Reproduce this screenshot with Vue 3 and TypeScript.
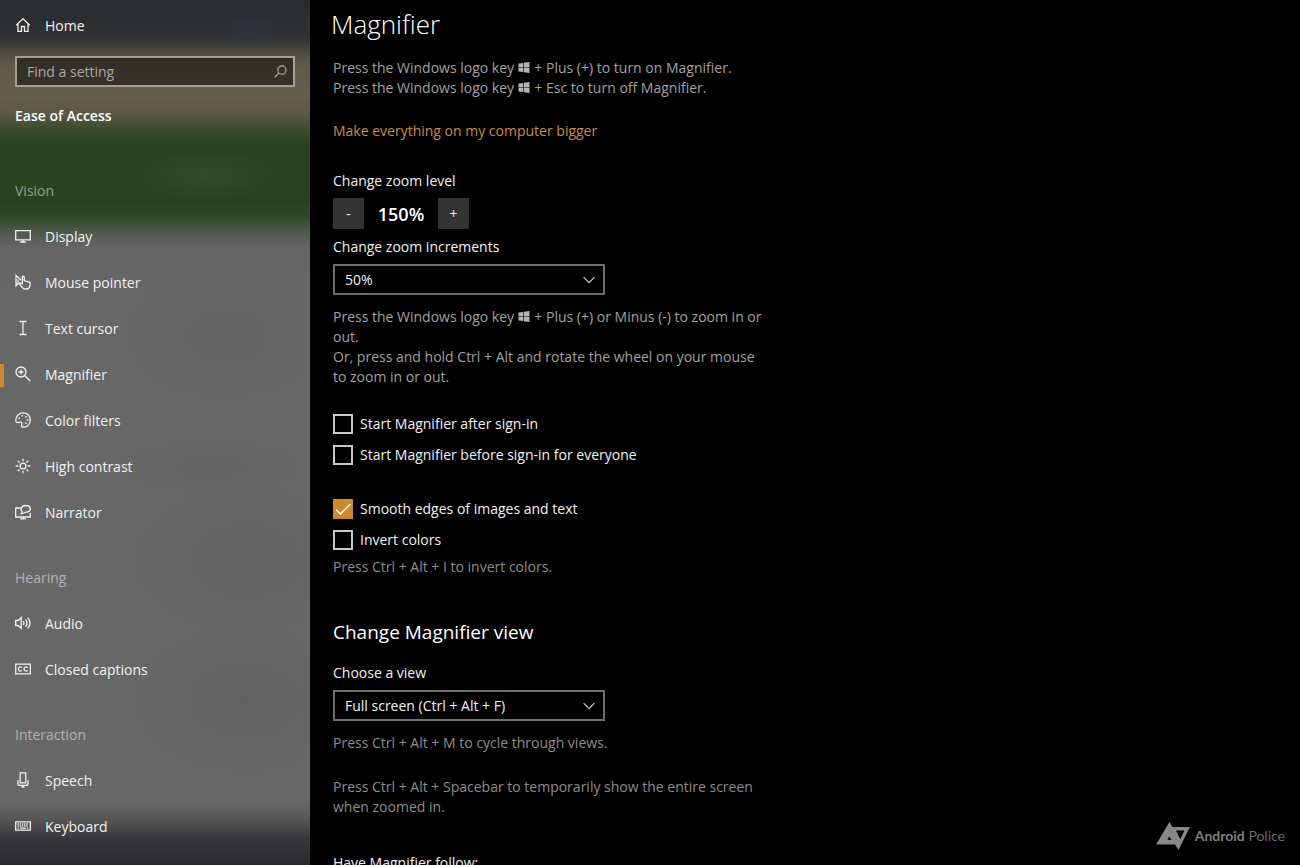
<script setup lang="ts">
import { ref } from 'vue'

interface NavItem {
  id: string
  label: string
}
interface NavGroup {
  title: string
  items: NavItem[]
}

const groups: NavGroup[] = [
  {
    title: 'Vision',
    items: [
      { id: 'display', label: 'Display' },
      { id: 'pointer', label: 'Mouse pointer' },
      { id: 'cursor', label: 'Text cursor' },
      { id: 'magnifier', label: 'Magnifier' },
      { id: 'filters', label: 'Color filters' },
      { id: 'contrast', label: 'High contrast' },
      { id: 'narrator', label: 'Narrator' },
    ],
  },
  {
    title: 'Hearing',
    items: [
      { id: 'audio', label: 'Audio' },
      { id: 'captions', label: 'Closed captions' },
    ],
  },
  {
    title: 'Interaction',
    items: [
      { id: 'speech', label: 'Speech' },
      { id: 'keyboard', label: 'Keyboard' },
    ],
  },
]

// Line drawings on a 16 x 16 grid
const icons: Record<string, string> = {
  home: '<path d="M1.200 8.200 8 1.800l6.800 6.400M3 7v7.300h3.500V9.500h3v4.800H13V7"/>',
  display: '<path d="M.7 2.600h14.600v9.200H.7zM8 11.800v2M5.200 14h5.600"/>',
  pointer:
    '<path d="M5 9.700 3.200 9.400 1 11.800V1.500l5 4.600M3 5.500v3.500"/><path d="M7.300 9.800V3.200c0-1.400 1.900-1.400 1.900 0v3.600l4.700 1.100c1 .3 1.400.9 1.300 1.900l-.5 2.700c-.5 1.700-1.600 2.500-3.200 2.500h-1.300c-1.200 0-2-.4-2.700-1.300L4.400 10.200c-.6-1.100.6-1.800 1.400-1.100z"/>',
  cursor: '<path d="M4.500 1.500h2.700L8 2l.8-.5h2.700M8 2v12M4.500 14.500h2.700L8 14l.8.5h2.700"/>',
  magnifier: '<circle cx="6" cy="6" r="5"/><path d="m9.700 9.700 5.600 5.300M3.600 6h4.800M6 3.600v4.800"/>',
  filters:
    '<path d="M.8 8.400C.9 4 4 .8 8 .8c4.200 0 7.200 3 7.200 7.100 0 4.300-2.700 7.300-6.500 7.300-1.700 0-2.400-1-2-2.400.4-1.500.3-2.700-1.100-2.900-1.600-.2-2.200 1.200-3.600.6-.8-.3-1.200-1-1.200-2.100z"/><path class="dots" d="M3.600 5.500h1.500v1.500H3.600zM6.600 3h1.500v1.500H6.600zM10.200 4h1.500v1.500h-1.500zM11.800 7.200h1.500v1.500h-1.500zM10 10.500h1.500V12H10z"/>',
  contrast:
    '<circle cx="8" cy="8" r="2.900"/><path d="M8 .7v2.500M8 12.800v2.500M.7 8h2.500M12.800 8h2.500M2.800 2.800l1.800 1.800M11.400 11.400l1.800 1.800M13.200 2.800l-1.800 1.800M4.600 11.400l-1.800 1.800"/>',
  narrator:
    '<path d="M5.500 4H.7v9h14.600V9M8 13v1.800M5.200 14.800h5.600"/><path d="M5.600 9.800c1.300-.6 1.700-1.300 1.500-2.200C4.800 5.200 6.500 1.500 10.600 1.500c5.900 0 6.200 6.300.5 6.700-1.500.1-2.300 1.400-5.500 1.600z"/>',
  audio:
    '<path d="M.7 5.500h2.500L6.200 2.600v10.800l-3-2.900H.7zM8.300 6.200c.8 1.100.8 2.500 0 3.600M10.500 4.400c1.800 2.200 1.800 5 0 7.200M12.700 2.600c2.900 3.300 2.900 7.500 0 10.800"/>',
  captions:
    '<path d="M.7 3.200h14.600v9.600H.7zM7 6.600C5.500 5.400 3.300 6 3.300 8s2.200 2.600 3.700 1.400M12.700 6.600C11.200 5.400 9 6 9 8s2.200 2.600 3.700 1.400"/>',
  speech: '<path d="M5.200.8h5.600v10H5.200zM3 8v3.400c0 1 .8 1.900 1.900 1.900h6.200c1.100 0 1.900-.9 1.900-1.900V8M8 13.300v2M6.500 15h3"/>',
  keyboard:
    '<path d="M.7 3.800h14.600v8.400H.7z"/><path stroke-dasharray="1.400 .8" d="M2.500 6h11M2.500 8h11"/><path d="M2.500 10.200h1.400M5 10.200h6M12 10.200h1.400"/>',
}

const active = ref('magnifier')
const query = ref('')
const zoom = ref(150)
const increment = ref('50')
const view = ref('full')
const afterSignIn = ref(false)
const beforeSignIn = ref(false)
const smooth = ref(true)
const invert = ref(false)

function step(direction: number): void {
  zoom.value = Math.min(1600, Math.max(100, zoom.value + direction * Number(increment.value)))
}
</script>

<template>
  <div class="app">
    <aside class="side">
      <a class="row home" href="#home">
        <svg class="icon" viewBox="0 0 16 16" aria-hidden="true" v-html="icons.home"></svg>
        <span>Home</span>
      </a>
      <div class="search">
        <input v-model="query" type="text" placeholder="Find a setting" aria-label="Find a setting" />
        <svg viewBox="0 0 14 14" aria-hidden="true">
          <circle cx="8.500" cy="5.500" r="4.500" />
          <path d="M5.200 8.800.8 13.200" />
        </svg>
      </div>
      <h2 class="area">Ease of Access</h2>
      <nav aria-label="Ease of Access">
        <section v-for="g in groups" :key="g.title" class="group">
          <h3>{{ g.title }}</h3>
          <a
            v-for="item in g.items"
            :key="item.id"
            class="row"
            :class="{ active: active === item.id }"
            :href="'#' + item.id"
            @click="active = item.id"
          >
            <svg class="icon" viewBox="0 0 16 16" aria-hidden="true" v-html="icons[item.id]"></svg>
            <span>{{ item.label }}</span>
          </a>
        </section>
      </nav>
    </aside>

    <main class="main">
      <h1>Magnifier</h1>
      <div class="hint">
        <p>
          Press the Windows logo key
          <svg class="win" viewBox="0 0 12 12" role="img" aria-label="Windows"><path d="M0 1.700 5 1v4.600H0zM5.700.9 12 0v5.600H5.700zM0 6.300h5V11l-5-.7zM5.700 6.300H12V12l-6.300-.9z" /></svg>
          + Plus (+) to turn on Magnifier.
        </p>
        <p>
          Press the Windows logo key
          <svg class="win" viewBox="0 0 12 12" role="img" aria-label="Windows"><path d="M0 1.700 5 1v4.600H0zM5.700.9 12 0v5.600H5.700zM0 6.300h5V11l-5-.7zM5.700 6.300H12V12l-6.300-.9z" /></svg>
          + Esc to turn off Magnifier.
        </p>
      </div>
      <a class="link" href="#display">Make everything on my computer bigger</a>

      <div class="label" id="zoom-label">Change zoom level</div>
      <div class="stepper" role="group" aria-labelledby="zoom-label">
        <button type="button" aria-label="Zoom out" @click="step(-1)">-</button>
        <output>{{ zoom }}%</output>
        <button type="button" aria-label="Zoom in" @click="step(1)">+</button>
      </div>

      <label class="label" for="increment">Change zoom increments</label>
      <div class="select">
        <select id="increment" v-model="increment">
          <option value="25">25%</option>
          <option value="50">50%</option>
          <option value="100">100%</option>
        </select>
        <svg viewBox="0 0 12 8" aria-hidden="true"><path d="m.6 1.200 5.400 5.400 5.400-5.400" /></svg>
      </div>
      <div class="hint after-select">
        <p>
          Press the Windows logo key
          <svg class="win" viewBox="0 0 12 12" role="img" aria-label="Windows"><path d="M0 1.700 5 1v4.600H0zM5.700.9 12 0v5.600H5.700zM0 6.300h5V11l-5-.7zM5.700 6.300H12V12l-6.300-.9z" /></svg>
          + Plus (+) or Minus (-) to zoom in or out.
        </p>
        <p>Or, press and hold Ctrl + Alt and rotate the wheel on your mouse to zoom in or out.</p>
      </div>

      <div class="checks">
        <label class="check"><input v-model="afterSignIn" type="checkbox" /><svg viewBox="0 0 20 20" aria-hidden="true"><path d="m3 10.500 4.500 4.500L17.500 5" /></svg>Start Magnifier after sign-in</label>
        <label class="check"><input v-model="beforeSignIn" type="checkbox" /><svg viewBox="0 0 20 20" aria-hidden="true"><path d="m3 10.500 4.500 4.500L17.500 5" /></svg>Start Magnifier before sign-in for everyone</label>
      </div>
      <div class="checks second">
        <label class="check"><input v-model="smooth" type="checkbox" /><svg viewBox="0 0 20 20" aria-hidden="true"><path d="m3 10.500 4.500 4.500L17.500 5" /></svg>Smooth edges of images and text</label>
        <label class="check"><input v-model="invert" type="checkbox" /><svg viewBox="0 0 20 20" aria-hidden="true"><path d="m3 10.500 4.500 4.500L17.500 5" /></svg>Invert colors</label>
      </div>
      <p class="hint dim after-check">Press Ctrl + Alt + I to invert colors.</p>

      <h2 class="title">Change Magnifier view</h2>
      <label class="label view-label" for="view">Choose a view</label>
      <div class="select">
        <select id="view" v-model="view">
          <option value="full">Full screen (Ctrl + Alt + F)</option>
          <option value="lens">Lens (Ctrl + Alt + L)</option>
          <option value="docked">Docked (Ctrl + Alt + D)</option>
        </select>
        <svg viewBox="0 0 12 8" aria-hidden="true"><path d="m.6 1.200 5.400 5.400 5.400-5.400" /></svg>
      </div>
      <p class="hint dim after-select">Press Ctrl + Alt + M to cycle through views.</p>
      <p class="hint dim spaced">
        Press Ctrl + Alt + Spacebar to temporarily show the entire screen when zoomed in.
      </p>
      <div class="label follow">Have Magnifier follow:</div>
    </main>

    <div class="brand">
      <svg viewBox="0 0 34 28" aria-hidden="true">
        <path fill-rule="evenodd" d="M13.500 0 16.500 5H34L22.500 28 19 22.500H0zM13.200 14.500 11.400 18h4.200zM20 8.500l4.200 8.500 4.300-8.500z" />
      </svg>
      <span><b>Android</b> Police</span>
    </div>
  </div>
</template>

<style>
body {
  margin: 0;
  background: #000;
}
</style>

<style scoped>
.app {
  display: flex;
  position: relative;
  height: 100vh;
  overflow: hidden;
  background: #000;
  color: #f2f2f2;
  font-family: 'Open Sans', 'Noto Sans', sans-serif;
  font-size: 14px;
  line-height: 20px;
}
h1,
h2,
h3,
p {
  margin: 0;
}
a {
  color: inherit;
  text-decoration: none;
}

.side {
  flex: 0 0 310px;
  box-sizing: border-box;
  padding-top: 3px;
  overflow: hidden;
  background:
    radial-gradient(70px 26px at 205px 176px, rgba(90, 110, 85, 0.2), rgba(90, 110, 85, 0.1) 60%, transparent),
    radial-gradient(40px 20px at 250px 34px, rgba(45, 60, 90, 0.25), transparent),
    radial-gradient(110px 70px at 225px 335px, rgba(70, 70, 70, 0.1), transparent),
    radial-gradient(100px 30px at 210px 467px, rgba(70, 70, 70, 0.1), transparent),
    radial-gradient(120px 80px at 245px 560px, rgba(70, 70, 70, 0.12), transparent),
    radial-gradient(120px 80px at 245px 700px, rgba(70, 70, 70, 0.12), transparent),
    linear-gradient(
      #2a2b2e 0,
      #303132 38px,
      #4a483f 50px,
      #5f5b4b 66px,
      #635f4d 96px,
      #5a5944 114px,
      #3e4d2f 128px,
      #29431f 145px,
      #27421f 200px,
      #2f4728 216px,
      #485645 229px,
      #646564 246px,
      #676767 300px,
      #676767 calc(100% - 62px),
      #565656 calc(100% - 46px),
      #38383a calc(100% - 26px),
      #29292b 100%
    );
}
.row {
  display: flex;
  align-items: center;
  gap: 14px;
  height: 46px;
  padding-left: 15px;
}
.row.active {
  background: linear-gradient(#cc8a2c, #cc8a2c) left center / 4px 23px no-repeat;
}
.icon {
  width: 16px;
  height: 16px;
  margin-bottom: 3px;
  fill: none;
  stroke: currentColor;
  stroke-width: 1.3;
}
.icon :deep(.dots) {
  fill: currentColor;
  stroke: none;
}
.search {
  display: flex;
  align-items: center;
  box-sizing: border-box;
  height: 31px;
  margin: 7px 15px 0;
  padding: 0 6px 0 10px;
  border: 2px solid #a09f98;
  background: rgba(24, 20, 18, 0.6);
}
.search input {
  flex: 1;
  min-width: 0;
  padding: 0;
  border: 0;
  outline: 0;
  background: none;
  color: #fff;
  font: inherit;
}
.search input::placeholder {
  color: #aaa79f;
  opacity: 1;
}
.search svg {
  width: 13px;
  height: 13px;
  fill: none;
  stroke: #b0aea6;
  stroke-width: 1.2;
}
.area {
  margin: 19px 15px 55px;
  color: #fff;
  font-size: 14px;
  font-weight: 600;
}
.group {
  margin-bottom: 32px;
}
.group h3 {
  margin: 0 15px 13px;
  color: rgba(255, 255, 255, 0.5);
  font-size: 14px;
  font-weight: 400;
}

.main {
  flex: 1;
  min-width: 0;
  padding: 7px 23px 40px;
  overflow-y: auto;
  scrollbar-width: none;
}
h1 {
  margin-left: -2px;
  color: #fff;
  font-size: 26px;
  font-weight: 300;
  line-height: 34px;
}
.hint {
  max-width: 436px;
  color: #a0a0a0;
}
.dim {
  color: #8c8c8c;
}
h1 + .hint {
  margin-top: 17px;
}
.win {
  width: 12px;
  height: 11px;
  margin-right: 1px;
  fill: #b4b4b4;
}
.link {
  display: block;
  width: fit-content;
  margin: 23px 0 30px;
  color: #c88b48;
}
.label {
  display: block;
}
.stepper {
  display: flex;
  margin: 7px 0;
}
.stepper button {
  width: 31px;
  height: 31px;
  padding: 0;
  border: 0;
  background: #333;
  color: #eee;
  font: inherit;
}
.stepper output {
  width: 74px;
  color: #fff;
  font-size: 18px;
  font-weight: 600;
  line-height: 32px;
  text-align: center;
}
.select {
  display: grid;
  align-items: center;
  max-width: 272px;
  margin-top: 7px;
}
.select select {
  grid-area: 1 / 1;
  box-sizing: border-box;
  width: 100%;
  height: 31px;
  padding: 0 30px 0 10px;
  border: 2px solid #6e6e6e;
  border-radius: 0;
  appearance: none;
  background: #000;
  color: #f2f2f2;
  font: inherit;
}
.select svg {
  grid-area: 1 / 1;
  justify-self: end;
  width: 12px;
  height: 8px;
  margin-right: 10px;
  fill: none;
  stroke: #ccc;
  stroke-width: 1.2;
  pointer-events: none;
}
.after-select {
  margin-top: 12px;
}
.checks {
  display: grid;
  gap: 11px;
  margin-top: 27px;
}
.checks.second {
  margin-top: 34px;
}
.check {
  display: grid;
  grid-template-columns: 20px auto;
  column-gap: 7px;
  align-items: center;
  width: fit-content;
}
.check input {
  grid-area: 1 / 1;
  box-sizing: border-box;
  width: 20px;
  height: 20px;
  margin: 0;
  border: 2px solid #c8c8c8;
  appearance: none;
}
.check input:checked {
  border-color: #cc8a2c;
  background: #cc8a2c;
}
.check svg {
  grid-area: 1 / 1;
  visibility: hidden;
  fill: none;
  stroke: #fff;
  stroke-width: 1.4;
  pointer-events: none;
}
.check input:checked + svg {
  visibility: visible;
}
.after-check {
  margin-top: 7px;
}
.title {
  margin-top: 41px;
  color: #fff;
  font-size: 19px;
  font-weight: 400;
  line-height: 28px;
}
.view-label {
  margin-top: 17px;
}
.spaced {
  margin-top: 24px;
}
.follow {
  margin-top: 36px;
}

.brand {
  position: absolute;
  right: 15px;
  bottom: 15px;
  display: flex;
  align-items: center;
  gap: 5px;
  color: #6c6c6c;
  font-family: Lato, sans-serif;
  font-size: 14px;
}
.brand svg {
  width: 34px;
  height: 28px;
  fill: #888;
}
.brand b {
  color: #808080;
  font-weight: 700;
}
</style>
